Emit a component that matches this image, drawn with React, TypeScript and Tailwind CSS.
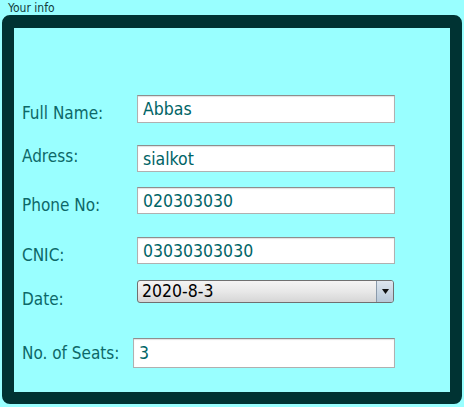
import React from 'react';

const font = { fontFamily: '"DejaVu Sans Condensed", "DejaVu Sans", sans-serif' };

const fields = [
  { label: 'Full Name:', value: 'Abbas', mt: 'mt-[67px]', h: 'h-[28px]', lt: 'mt-[8px]' },
  { label: 'Adress:', value: 'sialkot', mt: 'mt-[22px]', h: 'h-[27px]', lt: 'mt-[1px]' },
  { label: 'Phone No:', value: '020303030', mt: 'mt-[15px]', h: 'h-[27px]', lt: 'mt-[8px]' },
  { label: 'CNIC:', value: '03030303030', mt: 'mt-[22px]', h: 'h-[27px]', lt: 'mt-[8px]' },
];

function TextBox({ value, h, grow }: { value: string; h: string; grow?: boolean }) {
  return (
    <input
      readOnly
      value={value}
      className={`${h} ${grow ? 'flex-1 mr-[55px]' : 'w-[258px]'} border border-[#b0b0b0] border-t-[#8e8e8e] bg-white pl-[5px] text-[17.5px] text-[#006466] outline-none shadow-[inset_0_1px_1px_rgba(0,0,0,0.12)]`}
      style={font}
    />
  );
}

export default function App() {
  return (
    <div className="w-[464px] h-[407px] bg-[#99ffff] flex flex-col overflow-hidden" style={font}>
      <div className="pl-[8px] pt-[1px] text-[12px] leading-[14px] text-[#123c3c]">Your info</div>
      <div className="mx-[2px] h-[389px] rounded-[8px] border-[12px] border-t-[13px] border-[#003333] bg-[#99ffff]">
        <div className="flex flex-col pl-[8px]">
          {fields.map((f) => (
            <div key={f.label} className={`flex items-start ${f.mt}`}>
              <div className={`w-[115px] ${f.lt} text-[17px] leading-[20px] text-[#0d6868]`}>{f.label}</div>
              <TextBox value={f.value} h={f.h} />
            </div>
          ))}

          <div className="flex items-start mt-[15px]">
            <div className="w-[115px] mt-[9px] text-[17px] leading-[20px] text-[#0d6868]">Date:</div>
            <div className="flex h-[23px] w-[257px] items-stretch overflow-hidden rounded-[3px] border border-[#707070] bg-gradient-to-b from-[#f4f4f4] via-[#e8e8e8] to-[#d6d6d6]">
              <div className="flex-1 pl-[4px] text-[17.5px] leading-[21px] text-black">2020-8-3</div>
              <div className="flex w-[17px] items-center justify-center border-l border-[#8a9aab] bg-gradient-to-b from-[#dde6ef] to-[#b8c8d8]">
                <svg width="7" height="5" viewBox="0 0 7 5">
                  <path d="M0 0 H7 L3.5 5 Z" fill="#111" />
                </svg>
              </div>
            </div>
          </div>

          <div className="flex items-start mt-[29px]">
            <div className="w-[111px] mt-[5px] text-[17px] leading-[20px] text-[#0d6868] whitespace-nowrap">No. of Seats:</div>
            <TextBox value="3" h="h-[30px]" grow />
          </div>
        </div>
      </div>
    </div>
  );
}
